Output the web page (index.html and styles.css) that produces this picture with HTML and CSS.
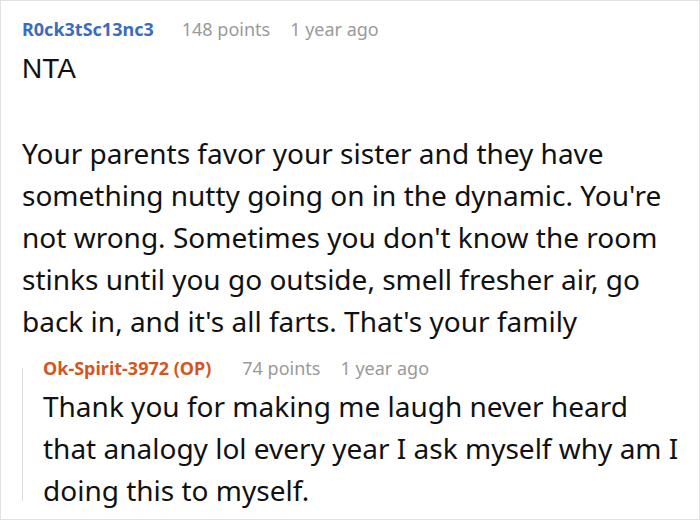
FILE: index.html
```html
<!DOCTYPE html>
<html lang="en">
<head>
<meta charset="utf-8">
<link rel="stylesheet" href="styles.css">
</head>
<body>
<div class="card">
  <div class="meta">
    <span class="author author-blue">R0ck3tSc13nc3</span>
    <span class="info">148 points</span>
    <span class="info">1 year ago</span>
  </div>
  <p class="text"><span class="nta">NTA</span><br><br>Your parents favor your sister and they have something nutty going on in the dynamic. You're not wrong. Sometimes you don't know the room stinks until you go outside, smell fresher air, go back in, and it's all farts. That's your family</p>
  <div class="reply">
    <div class="meta">
      <span class="author author-op">Ok-Spirit-3972 (OP)</span>
      <span class="info">74 points</span>
      <span class="info">1 year ago</span>
    </div>
    <p class="text">Thank you for making me laugh never heard that analogy lol every year I ask myself why am I doing this to myself.</p>
  </div>
</div>
</body>
</html>
```
FILE: styles.css
```css
html, body {
  margin: 0;
  padding: 0;
  background: #ffffff;
}
.card {
  box-sizing: border-box;
  width: 700px;
  height: 520px;
  border: 1px solid #e2e2e2;
  padding: 16px 10px 0 21px;
  font-family: "Noto Sans", "Open Sans", sans-serif;
  color: #111111;
  overflow: hidden;
}
.meta {
  display: flex;
  gap: 20px;
  align-items: baseline;
  font-size: 18px;
  line-height: 24px;
}
.author {
  font-weight: 700;
  margin-right: 8px;
}
.author-blue { color: #3a6cc0; }
.author-op {
  color: #d4561f;
  margin-right: 11px;
}
.info { color: #9a9a9a; }
.text {
  margin: 5px 0 0;
  font-size: 28px;
  line-height: 42px;
}
.nta {
  font-family: "Liberation Sans", Arial, sans-serif;
}
.reply {
  position: relative;
  margin-top: 14px;
  padding: 0 8px 0 21px;
}
.reply::before {
  content: "";
  position: absolute;
  left: 0;
  top: 12px;
  bottom: 10px;
  width: 1px;
  background: #dddddd;
}
```
